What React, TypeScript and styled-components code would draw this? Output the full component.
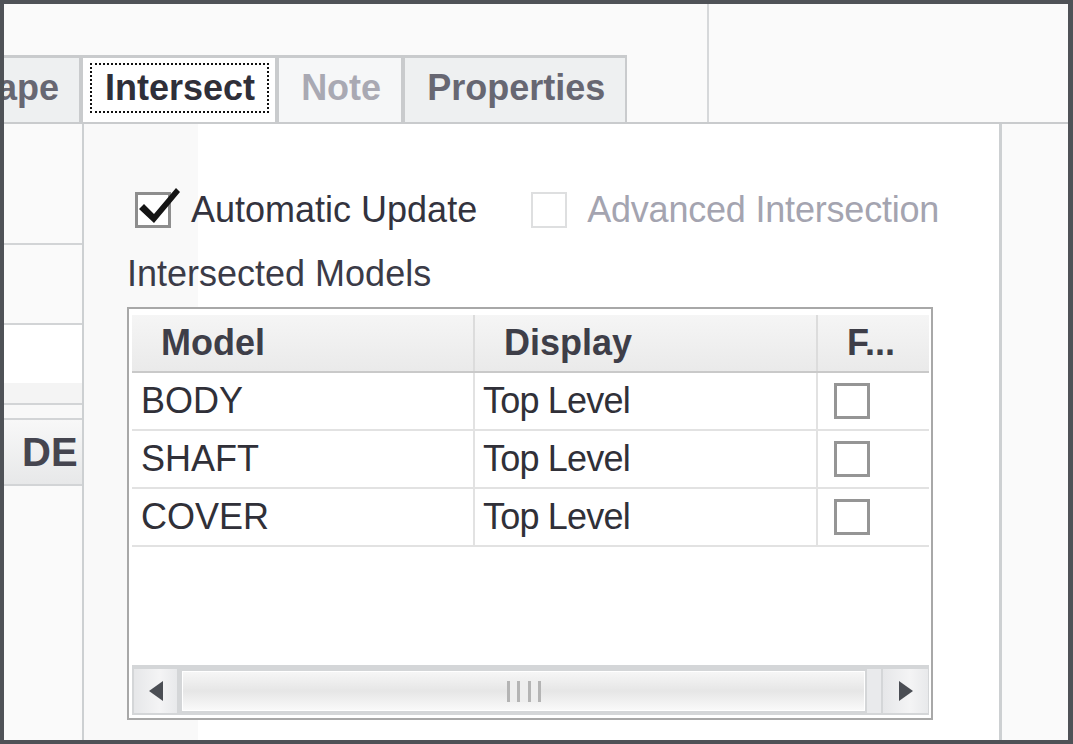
import React from "react";
import styled, { createGlobalStyle } from "styled-components";

const Global = createGlobalStyle`
  html, body { margin: 0; padding: 0; background: #fafafa; }
  body { font-family: "Liberation Sans", Arial, sans-serif; }
  * { box-sizing: border-box; }
`;

const Frame = styled.div`
  width: 1073px;
  height: 744px;
  border: 4px solid #4f5257;
  border-right-width: 5px;
  background: #fafafa;
  display: flex;
  flex-direction: column;
  overflow: hidden;
  font-family: "Liberation Sans", Arial, sans-serif;
`;

const Header = styled.div`
  height: 120px;
  flex: none;
  display: flex;
  border-bottom: 2px solid #c9cbcd;
`;

const TabArea = styled.div`
  width: 705px;
  flex: none;
  border-right: 2px solid #d6d8da;
  display: flex;
  align-items: flex-end;
  overflow: hidden;
`;

const HeaderFill = styled.div`
  flex: 1;
  background: #fafafa;
`;

type TabState = "normal" | "active" | "disabled";

const tabBg: Record<TabState, string> = {
  normal: "#eef0f1",
  active: "#ffffff",
  disabled: "#f6f7f8",
};

const tabColor: Record<TabState, string> = {
  normal: "#676772",
  active: "#2f2f39",
  disabled: "#a9a9b3",
};

const Tab = styled.div<{ $state: TabState }>`
  height: 67px;
  flex: none;
  display: flex;
  align-items: center;
  padding: 0 6px 4px 7px;
  border: 2px solid #c9cbcd;
  border-top-width: 3px;
  border-bottom: none;
  background: ${(p) => tabBg[p.$state]};
  color: ${(p) => tabColor[p.$state]};
  font-weight: bold;
  font-size: 36px;
  white-space: nowrap;
`;

const ClippedTab = styled(Tab)`
  margin-left: -77px;
`;

const TabLabel = styled.span<{ $focused?: boolean }>`
  display: block;
  padding: 0 12px 0 13px;
  line-height: 46px;
  border: 2px dotted ${(p) => (p.$focused ? "#111" : "transparent")};
`;

const Body = styled.div`
  flex: 1;
  display: flex;
  min-height: 0;
`;

const SidePanel = styled.div`
  width: 78px;
  flex: none;
  display: flex;
  flex-direction: column;
  overflow: hidden;
`;

const SideBlock = styled.div<{ $h: number; $bg: string }>`
  height: ${(p) => p.$h}px;
  flex: none;
  background: ${(p) => p.$bg};
  border-bottom: 2px solid #d2d4d6;
`;

const SideButton = styled.div`
  height: 66px;
  flex: none;
  display: flex;
  align-items: center;
  padding-left: 18px;
  background: linear-gradient(#f8f8f8, #e7e8e9);
  border-bottom: 2px solid #d2d4d6;
  font-weight: bold;
  font-size: 40px;
  color: #45454f;
  white-space: nowrap;
  overflow: hidden;
`;

const SideRest = styled.div`
  flex: 1;
  background: #fafafa;
`;

const Content = styled.div`
  width: 920px;
  flex: none;
  border-left: 2px solid #cdd0d2;
  border-right: 3px solid #cdd0d2;
  background: linear-gradient(to right, #f9f9f9 0 114px, #ffffff 114px);
  padding: 66px 0 0 43px;
  display: flex;
  flex-direction: column;
  align-items: flex-start;
`;

const RightFill = styled.div`
  flex: 1;
  background: #fafafa;
`;

const OptionRow = styled.div`
  display: flex;
  align-items: center;
  height: 40px;
  margin-left: 8px;
  font-size: 36px;
`;

const Option = styled.label<{ $disabled?: boolean }>`
  display: flex;
  align-items: center;
  gap: 20px;
  line-height: 40px;
  color: ${(p) => (p.$disabled ? "#a4a4b0" : "#33333e")};
  letter-spacing: ${(p) => (p.$disabled ? "-0.2px" : "0")};
  & + & {
    margin-left: 54px;
  }
`;

const Box = styled.span<{ $disabled?: boolean }>`
  position: relative;
  display: block;
  width: 36px;
  height: 36px;
  flex: none;
  border: ${(p) => (p.$disabled ? "2px solid #dedfe0" : "3px solid #8e8e8e")};
  background: #fff;
`;

const CheckMark = styled.svg`
  position: absolute;
  left: -3px;
  top: -3px;
  overflow: visible;
`;

const SectionLabel = styled.div`
  margin-top: 24px;
  font-size: 36px;
  line-height: 40px;
  color: #3b3b47;
`;

const Table = styled.div`
  margin-top: 13px;
  width: 806px;
  height: 413px;
  border: 2px solid #a8a8a8;
  background: #fff;
  padding: 6px 2px 3px 3px;
  display: flex;
  flex-direction: column;
`;

const GridRow = styled.div`
  display: grid;
  grid-template-columns: 343px 343px 1fr;
  flex: none;
`;

const HeaderRow = styled(GridRow)`
  height: 58px;
  background: linear-gradient(#f5f5f5, #eaeaea);
  border-bottom: 2px solid #c9c9c9;
`;

const HeadCell = styled.div`
  display: flex;
  align-items: center;
  padding-left: 29px;
  font-weight: bold;
  font-size: 36px;
  color: #3e3e48;
  border-right: 2px solid #dcdcdc;
  &:last-child {
    border-right: none;
  }
`;

const DataRow = styled(GridRow)`
  height: 58px;
  border-bottom: 2px solid #e2e2e2;
`;

const Cell = styled.div<{ $tight?: boolean }>`
  display: flex;
  align-items: center;
  padding-left: ${(p) => (p.$tight ? "8px" : "9px")};
  font-size: 36px;
  color: #303038;
  letter-spacing: ${(p) => (p.$tight ? "-0.8px" : "0")};
  border-right: 2px solid #e2e2e2;
  white-space: nowrap;
  &:last-child {
    border-right: none;
    padding-left: 16px;
  }
`;

const CellBox = styled.span`
  display: block;
  width: 36px;
  height: 36px;
  border: 3px solid #959595;
  background: #fff;
`;

const Spacer = styled.div`
  flex: 1;
`;

const ScrollBar = styled.div`
  height: 50px;
  flex: none;
  display: flex;
  align-items: flex-start;
  padding: 4px 1px 0 2px;
  background: #d4d6d8;
`;

const ArrowButton = styled.div<{ $w: number }>`
  width: ${(p) => p.$w}px;
  height: 44px;
  flex: none;
  display: flex;
  align-items: center;
  justify-content: center;
  background: linear-gradient(to right, #e6e7e9, #f4f4f5 60%, #e8e9eb);
`;

const Thumb = styled.div`
  width: 683px;
  height: 40px;
  flex: none;
  margin: 2px 2px 0 5px;
  display: flex;
  align-items: center;
  justify-content: center;
  border: 1px solid #ffffff;
  background: linear-gradient(#f6f6f6, #e6e6e6 50%, #f9f9f9);
`;

const Grip = styled.span`
  display: block;
  width: 34px;
  height: 21px;
  background: repeating-linear-gradient(
    to right,
    #b4b4b4 0 3px,
    #eeeeee 3px 10.3px
  );
`;

const TrackRest = styled.div`
  flex: 1;
  height: 44px;
  margin-right: 2px;
  background: #e9eaec;
`;

const rows = ["BODY", "SHAFT", "COVER"];

export default function App() {
  return (
    <>
      <Global />
      <Frame>
        <Header>
          <TabArea>
            <ClippedTab $state="normal">
              <TabLabel>Shape</TabLabel>
            </ClippedTab>
            <Tab $state="active">
              <TabLabel $focused>Intersect</TabLabel>
            </Tab>
            <Tab $state="disabled">
              <TabLabel>Note</TabLabel>
            </Tab>
            <Tab $state="normal">
              <TabLabel>Properties</TabLabel>
            </Tab>
          </TabArea>
          <HeaderFill />
        </Header>
        <Body>
          <SidePanel>
            <SideBlock $h={121} $bg="#fafafa" />
            <SideBlock $h={80} $bg="#fafafa" />
            <SideBlock $h={80} $bg="linear-gradient(#ffffff 0 58px, #f4f4f4 58px)" />
            <SideBlock $h={15} $bg="#f8f8f8" />
            <SideButton>DE</SideButton>
            <SideRest />
          </SidePanel>
          <Content>
            <OptionRow>
              <Option>
                <Box>
                  <CheckMark width="50" height="40" viewBox="0 0 50 40">
                    <polygon
                      points="4,17 9,12 19,22 41,-4 45,0 19,31"
                      fill="#141414"
                    />
                  </CheckMark>
                </Box>
                Automatic Update
              </Option>
              <Option $disabled>
                <Box $disabled />
                Advanced Intersection
              </Option>
            </OptionRow>
            <SectionLabel>Intersected Models</SectionLabel>
            <Table>
              <HeaderRow>
                <HeadCell>Model</HeadCell>
                <HeadCell>Display</HeadCell>
                <HeadCell>F...</HeadCell>
              </HeaderRow>
              {rows.map((r) => (
                <DataRow key={r}>
                  <Cell>{r}</Cell>
                  <Cell $tight>Top Level</Cell>
                  <Cell>
                    <CellBox />
                  </Cell>
                </DataRow>
              ))}
              <Spacer />
              <ScrollBar>
                <ArrowButton $w={43}>
                  <svg width="14" height="20" viewBox="0 0 14 20">
                    <polygon points="14,0 14,20 0,10" fill="#4b4e54" />
                  </svg>
                </ArrowButton>
                <Thumb>
                  <Grip />
                </Thumb>
                <TrackRest />
                <ArrowButton $w={45}>
                  <svg width="14" height="20" viewBox="0 0 14 20">
                    <polygon points="0,0 14,10 0,20" fill="#4b4e54" />
                  </svg>
                </ArrowButton>
              </ScrollBar>
            </Table>
          </Content>
          <RightFill />
        </Body>
      </Frame>
    </>
  );
}
